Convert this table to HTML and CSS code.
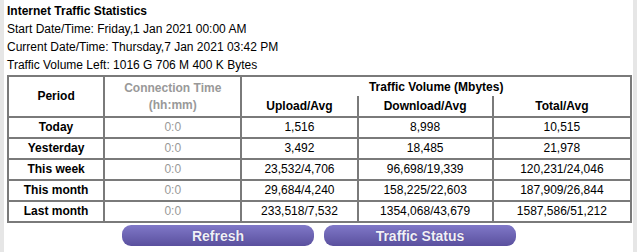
FILE: index.html
```html
<!DOCTYPE html>
<html>
<head>
<meta charset="utf-8">
<link rel="stylesheet" href="styles.css">
</head>
<body>
<div class="page">
  <div class="info">
    <div class="title">Internet Traffic Statistics</div>
    <div class="line">Start Date/Time: Friday,1 Jan 2021 00:00 AM</div>
    <div class="line">Current Date/Time: Thursday,7 Jan 2021 03:42 PM</div>
    <div class="line">Traffic Volume Left: 1016 G 706 M 400 K Bytes</div>
  </div>
  <table class="stats">
    <colgroup>
      <col class="c1"><col class="c2"><col class="c3"><col class="c4"><col class="c5">
    </colgroup>
    <thead>
      <tr>
        <th rowspan="2">Period</th>
        <th rowspan="2" class="muted">Connection Time<br>(hh:mm)</th>
        <th colspan="3" class="group">Traffic Volume (Mbytes)</th>
      </tr>
      <tr>
        <th class="sub">Upload/Avg</th>
        <th class="sub">Download/Avg</th>
        <th class="sub">Total/Avg</th>
      </tr>
    </thead>
    <tbody>
      <tr><th>Today</th><td class="muted">0:0</td><td>1,516</td><td>8,998</td><td>10,515</td></tr>
      <tr><th>Yesterday</th><td class="muted">0:0</td><td>3,492</td><td>18,485</td><td>21,978</td></tr>
      <tr><th>This week</th><td class="muted">0:0</td><td>23,532/4,706</td><td>96,698/19,339</td><td>120,231/24,046</td></tr>
      <tr><th>This month</th><td class="muted">0:0</td><td>29,684/4,240</td><td>158,225/22,603</td><td>187,909/26,844</td></tr>
      <tr><th>Last month</th><td class="muted">0:0</td><td>233,518/7,532</td><td>1354,068/43,679</td><td>1587,586/51,212</td></tr>
    </tbody>
  </table>
  <div class="buttons">
    <button class="btn">Refresh</button>
    <button class="btn">Traffic Status</button>
  </div>
</div>
</body>
</html>
```

FILE: styles.css
```css
html, body {
  margin: 0;
  padding: 0;
  background: #e6e6e6;
}
body {
  padding: 0 4px;
  font-family: "Liberation Sans", Arial, sans-serif;
  font-size: 12px;
  color: #000;
}
.page {
  background: #fff;
  height: 252px;
  padding: 2px 1px 0 3px;
  box-sizing: border-box;
}
.info {
  line-height: 18px;
}
.title {
  font-weight: bold;
}
.stats {
  margin-top: 1px;
  width: 625px;
  border-collapse: collapse;
  border: 2px solid #7a7a7a;
}
.c1 { width: 96px; }
.c2 { width: 137px; }
.c3 { width: 116px; }
.c4 { width: 135px; }
.c5 { width: 138px; }
.stats th, .stats td {
  border: 2px solid #7a7a7a;
  text-align: center;
  padding: 0;
  height: 19px;
  line-height: 17px;
}
.stats thead th {
  height: 18px;
}
.stats thead th.group {
  border-bottom: none;
  padding-top: 2px;
  height: 17px;
}
.stats thead th.sub {
  border-top: none;
  height: 19px;
  padding-top: 1px;
}
.stats th {
  font-weight: bold;
}
.stats td {
  font-weight: normal;
}
.muted {
  color: #999;
}
.buttons {
  display: flex;
  justify-content: center;
  gap: 10px;
  margin-top: 2px;
  padding-right: 1px;
}
.btn {
  width: 192px;
  height: 21px;
  border: none;
  border-radius: 9px;
  background: linear-gradient(#8078c8, #5a509e);
  color: #f0f0f8;
  font-family: "Liberation Sans", Arial, sans-serif;
  font-weight: bold;
  font-size: 14px;
  padding: 0;
  text-shadow: 0 0 1px rgba(40,30,90,0.6);
}
```
